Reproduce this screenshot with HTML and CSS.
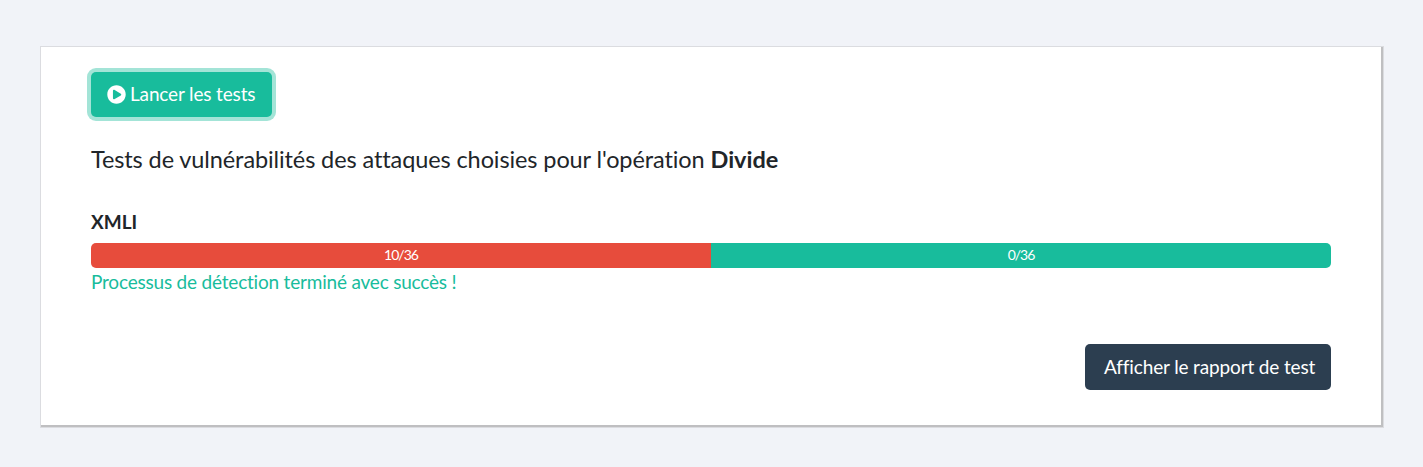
FILE: index.html
```html
<!DOCTYPE html>
<html lang="fr">
<head>
<meta charset="utf-8">
<title>Tests de vulnérabilités</title>
<link rel="stylesheet" href="styles.css">
</head>
<body>
<main class="card">
  <button class="btn btn-run"><svg class="icon" viewBox="0 0 512 512"><path fill="currentColor" d="M256 8C119 8 8 119 8 256s111 248 248 248 248-111 248-248S393 8 256 8zm115.700 272l-176 101c-15.800 8.800-35.700-2.500-35.700-21V152c0-18.400 19.800-29.800 35.700-21l176 107c16.400 9.200 16.400 32.900 0 42z"/></svg><span>Lancer les tests</span></button>
  <h1 class="title">Tests de vulnérabilités des attaques choisies pour l'opération <b>Divide</b></h1>
  <h2 class="label">XMLI</h2>
  <div class="progress">
    <div class="bar bar-danger">10/36</div>
    <div class="bar bar-success">0/36</div>
  </div>
  <p class="status">Processus de détection terminé avec succès !</p>
  <div class="actions"><button class="btn btn-report">Afficher le rapport de test</button></div>
</main>
</body>
</html>
```
FILE: styles.css
```css
* { box-sizing: border-box; }
body {
  margin: 0;
  min-height: 100vh;
  padding: 47px 42px 0 41px;
  background: #f1f3f8;
  color: #212529;
  font-family: Lato, sans-serif;
  font-size: 19px;
  line-height: 28px;
}
.card {
  display: flex;
  flex-direction: column;
  height: 378px;
  padding: 25px 50px 0;
  background: #fff;
  box-shadow: 1px 1px 0 1px #bfbfc1, 1px 1px 0 2px #dbdce0;
}
.btn {
  display: flex;
  align-items: center;
  height: 46px;
  border: 0;
  border-radius: 5px;
  color: #fff;
  font: inherit;
  white-space: nowrap;
}
.btn-run {
  align-self: flex-start;
  gap: 4px;
  width: 181px;
  height: 45px;
  padding: 0 16px;
  background: #18bc9c;
  box-shadow: 0 0 0 4px #a3e4d7;
  letter-spacing: -0.15px;
}
.btn-run span { padding-bottom: 1px; }
.icon { width: 19px; height: 19px; flex: none; }
.title {
  margin: 28px 0 0;
  font-size: 23.5px;
  font-weight: 400;
  line-height: 29px;
  letter-spacing: -0.1px;
}
.title b { letter-spacing: 0; }
.label {
  margin: 34px 0 0;
  font-size: 19px;
  font-weight: 700;
  line-height: 28px;
}
.progress {
  display: flex;
  height: 25px;
  margin-top: 7px;
  border-radius: 5px;
  overflow: hidden;
}
.bar {
  flex: 1;
  color: #fff;
  font-size: 14px;
  line-height: 24px;
  letter-spacing: -1px;
  text-align: center;
}
.bar-danger { background: #e74c3c; }
.bar-success { background: #18bc9c; }
.status { margin: 0; color: #18bc9c; letter-spacing: -0.2px; }
.actions { display: flex; justify-content: flex-end; margin-top: 48px; }
.btn-report { width: 246px; padding: 0 0 0 19px; background: #2c3e50; letter-spacing: -0.14px; }
```
